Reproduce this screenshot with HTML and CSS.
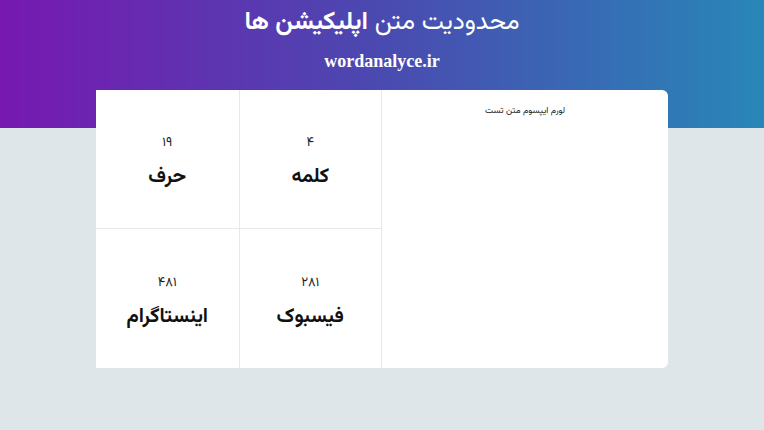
FILE: index.html
```html
<!DOCTYPE html>
<html lang="fa" dir="rtl">
<head>
<meta charset="utf-8">
<title>محدودیت متن اپلیکیشن ها</title>
<link rel="stylesheet" href="styles.css">
</head>
<body>
<header class="hero">
  <h1 class="title">محدودیت متن <b>اپلیکیشن ها</b></h1>
  <p class="site">wordanalyce.ir</p>
</header>
<main class="card">
  <section class="text-panel">
    <p class="sample">لورم ایپسوم متن تست</p>
  </section>
  <section class="stats">
    <div class="cell"><span class="num">۴</span><span class="label">کلمه</span></div>
    <div class="cell"><span class="num">۱۹</span><span class="label">حرف</span></div>
    <div class="cell"><span class="num">۲۸۱</span><span class="label">فیسبوک</span></div>
    <div class="cell"><span class="num">۴۸۱</span><span class="label">اینستاگرام</span></div>
  </section>
</main>
</body>
</html>
```

FILE: styles.css
```css
* { box-sizing: border-box; }
html, body { margin: 0; padding: 0; }
body {
  width: 764px;
  height: 430px;
  overflow: hidden;
  font-family: "Vazirmatn", "Noto Sans Arabic", "DejaVu Sans", sans-serif;
  background: linear-gradient(90deg, #7718b1 0%, #4a4ab0 50%, #2887b8 100%) top left / 100% 128px no-repeat, #dfe6e9;
  color: #111;
}
.hero {
  text-align: center;
  color: #fff;
  padding-top: 7px;
  height: 90px;
}
.title {
  margin: 0;
  font-size: 25px;
  font-weight: 400;
  line-height: 32px;
}
.title b { font-weight: 700; }
.site {
  margin: 11px 0 0;
  font-family: "Liberation Serif", serif;
  font-weight: 700;
  font-size: 18px;
  line-height: 22px;
  direction: ltr;
}
.card {
  width: 572px;
  height: 278px;
  margin: 0 auto;
  background: #fff;
  display: flex;
  border-radius: 0 6px 6px 0;
}
.text-panel {
  width: 287px;
  border-left: 1px solid #e8e8e8;
  padding-top: 14px;
  text-align: center;
}
.sample {
  margin: 0;
  font-size: 9px;
  line-height: 14px;
  color: #222;
}
.stats {
  flex: 1;
  display: grid;
  grid-template-columns: 1fr 1fr;
  grid-template-rows: 1fr 1fr;
}
.cell {
  display: flex;
  flex-direction: column;
  align-items: center;
  justify-content: center;
  border-bottom: 1px solid #e8e8e8;
  padding-top: 6px;
}
.cell:nth-child(odd) { border-left: 1px solid #e8e8e8; }
.cell:nth-child(n+3) { border-bottom: none; }
.num {
  font-size: 13px;
  line-height: 20px;
  color: #222;
}
.label {
  margin-top: 10px;
  font-size: 20px;
  font-weight: 700;
  line-height: 28px;
  color: #111;
}
```
